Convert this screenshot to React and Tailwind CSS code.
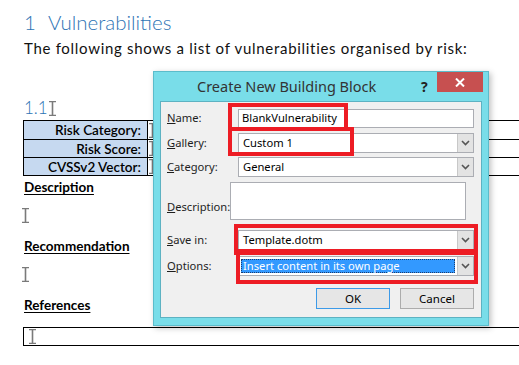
import React from 'react';

const DOC_FONT = { fontFamily: 'Lato, "Liberation Sans", sans-serif' };
const UI_FONT = { fontFamily: '"Noto Sans", "Open Sans", sans-serif' };

function IBeam({ className = '' }) {
  return (
    <svg width="7" height="15" viewBox="0 0 7 15" className={className}>
      <path d="M0 0.5h7M0 14.5h7M3.5 0.5v14" stroke="#7a7a7a" strokeWidth="1.6" fill="none" />
    </svg>
  );
}

function Chevron() {
  return (
    <svg width="9" height="6" viewBox="0 0 9 6">
      <path d="M1 1l3.5 3.5L8 1" stroke="#555" strokeWidth="1.6" fill="none" />
    </svg>
  );
}

function Label({ k, rest }) {
  return (
    <span className="w-[71px] shrink-0 text-[11.2px] text-[#1e1e1e]">
      <span className="underline">{k}</span>
      {rest}
    </span>
  );
}

function TextBox({ value, h = 'h-[19px]' }) {
  return (
    <div className={`w-[236px] ${h} bg-white border border-[#abadb3] flex items-center px-[3px] text-[11.2px] text-black`}>
      {value}
    </div>
  );
}

function Dropdown({ value, selected }) {
  return (
    <div className="w-[236px] h-[20px] bg-white border border-[#abadb3] flex items-stretch text-[11.2px] text-black">
      <div className="flex-1 flex items-center p-[2px]">
        {selected ? (
          <div className="w-full h-full bg-[#3399ff] text-white flex items-center px-[1px] border border-dotted border-[#1b3d6e]">
            {value}
          </div>
        ) : (
          <span className="px-[2px]">{value}</span>
        )}
      </div>
      <div className="w-[16px] bg-[#e3e3e3] border-l border-[#c8c8c8] flex items-center justify-center">
        <Chevron />
      </div>
    </div>
  );
}

function Dialog() {
  return (
    <div className="absolute left-[153px] top-[71px] w-[336px] h-[255px] bg-[#79dde9] border border-[#5cbccb] shadow-[2px_2px_6px_rgba(0,0,0,0.25)]" style={UI_FONT}>
      <div className="h-[29px] flex items-center pl-[43px] relative">
        <span className="text-[14.5px] text-[#333]">Create New Building Block</span>
        <span className="absolute left-[267px] top-[4px] text-[14px] font-bold text-[#222]">?</span>
        <div className="absolute left-[283px] top-0 w-[46px] h-[20px] bg-[#c75050] flex items-center justify-center">
          <svg width="10" height="9" viewBox="0 0 10 9">
            <path d="M1 0.5l8 8M9 0.5l-8 8" stroke="#fff" strokeWidth="2" />
          </svg>
        </div>
      </div>
      <div className="mx-[6px] h-[217px] bg-[#f0f0f0] border border-[#5db2c2] pl-[6px] pt-[7px] flex flex-col">
        <div className="flex items-center">
          <Label k="N" rest="ame:" />
          <TextBox value="BlankVulnerability" />
        </div>
        <div className="flex items-center mt-[5px]">
          <Label k="G" rest="allery:" />
          <Dropdown value="Custom 1" />
        </div>
        <div className="flex items-center mt-[4px]">
          <Label k="C" rest="ategory:" />
          <Dropdown value="General" />
        </div>
        <div className="flex items-center mt-[5px]">
          <span className="pt-[7px]">
            <Label k="D" rest="escription:" />
          </span>
          <TextBox value="" h="h-[38px]" />
        </div>
        <div className="flex items-center mt-[10px]">
          <Label k="S" rest="ave in:" />
          <Dropdown value="Template.dotm" />
        </div>
        <div className="flex items-center mt-[6px]">
          <Label k="O" rest="ptions:" />
          <Dropdown value="Insert content in its own page" selected />
        </div>
        <div className="flex gap-[10px] mt-[12px] pl-[149px]">
          <div className="w-[74px] h-[21px] border border-[#3c9ae8] bg-[#e6e6e6] flex items-center justify-center text-[11.5px] text-black">OK</div>
          <div className="w-[74px] h-[21px] border border-[#acacac] bg-[#e6e6e6] flex items-center justify-center text-[11.5px] text-black">Cancel</div>
        </div>
      </div>
      <div className="absolute left-[74px] top-[31px] w-[120px] h-[28px] border-[4.5px] border-[#ed1c24]" />
      <div className="absolute left-[74px] top-[55px] w-[126px] h-[29px] border-[4.5px] border-[#ed1c24]" />
      <div className="absolute left-[80px] top-[152px] w-[244px] h-[31px] border-[4.5px] border-[#ed1c24]" />
      <div className="absolute left-[82px] top-[177px] w-[242px] h-[35px] border-[4.5px] border-[#ed1c24]" />
    </div>
  );
}

const ROWS = ['Risk Category:', 'Risk Score:', 'CVSSv2 Vector:'];

export default function App() {
  return (
    <div className="relative w-[519px] h-[365px] bg-white overflow-hidden" style={DOC_FONT}>
      <div className="pl-[24px] pt-[9px]">
        <h1 className="text-[20.5px] text-[#2e74b5] font-light leading-[26px] flex">
          <span className="w-[24px]">1</span>
          <span>Vulnerabilities</span>
        </h1>
        <p className="text-[15px] tracking-[0.7px] text-[#111] leading-[18px] mt-[4px]">
          The following shows a list of vulnerabilities organised by risk:
        </p>
        <div className="flex items-center mt-[41px] h-[20px]">
          <span className="text-[17px] text-[#2e74b5] font-light">1.1</span>
          <IBeam className="ml-[1px]" />
        </div>
        <table className="-ml-[1px] mt-[2px] w-[520px] border-collapse text-[13.5px]">
          <tbody>
            {ROWS.map((r, i) => (
              <tr key={r} className={i === 0 ? 'h-[19px]' : 'h-[18px]'}>
                <td className="w-[124px] bg-[#c6d9f0] border border-black text-right pr-[6px] leading-[16px] font-semibold">{r}</td>
                <td className="border border-black pl-[1px]">
                  <IBeam className="block" />
                </td>
              </tr>
            ))}
          </tbody>
        </table>
        <div className="mt-[2px] text-[13.5px] font-bold underline underline-offset-2 leading-[18px]">Description</div>
        <IBeam className="mt-[12px] -ml-[2px]" />
        <div className="mt-[14px] text-[13.5px] font-bold underline underline-offset-2 leading-[18px]">Recommendation</div>
        <IBeam className="mt-[12px] -ml-[2px]" />
        <div className="mt-[14px] text-[13.5px] font-bold underline underline-offset-2 leading-[18px]">References</div>
        <div className="-ml-[1px] mt-[13px] w-[520px] h-[19px] border border-black pl-[5px] flex items-center">
          <IBeam />
        </div>
      </div>
      <Dialog />
    </div>
  );
}
